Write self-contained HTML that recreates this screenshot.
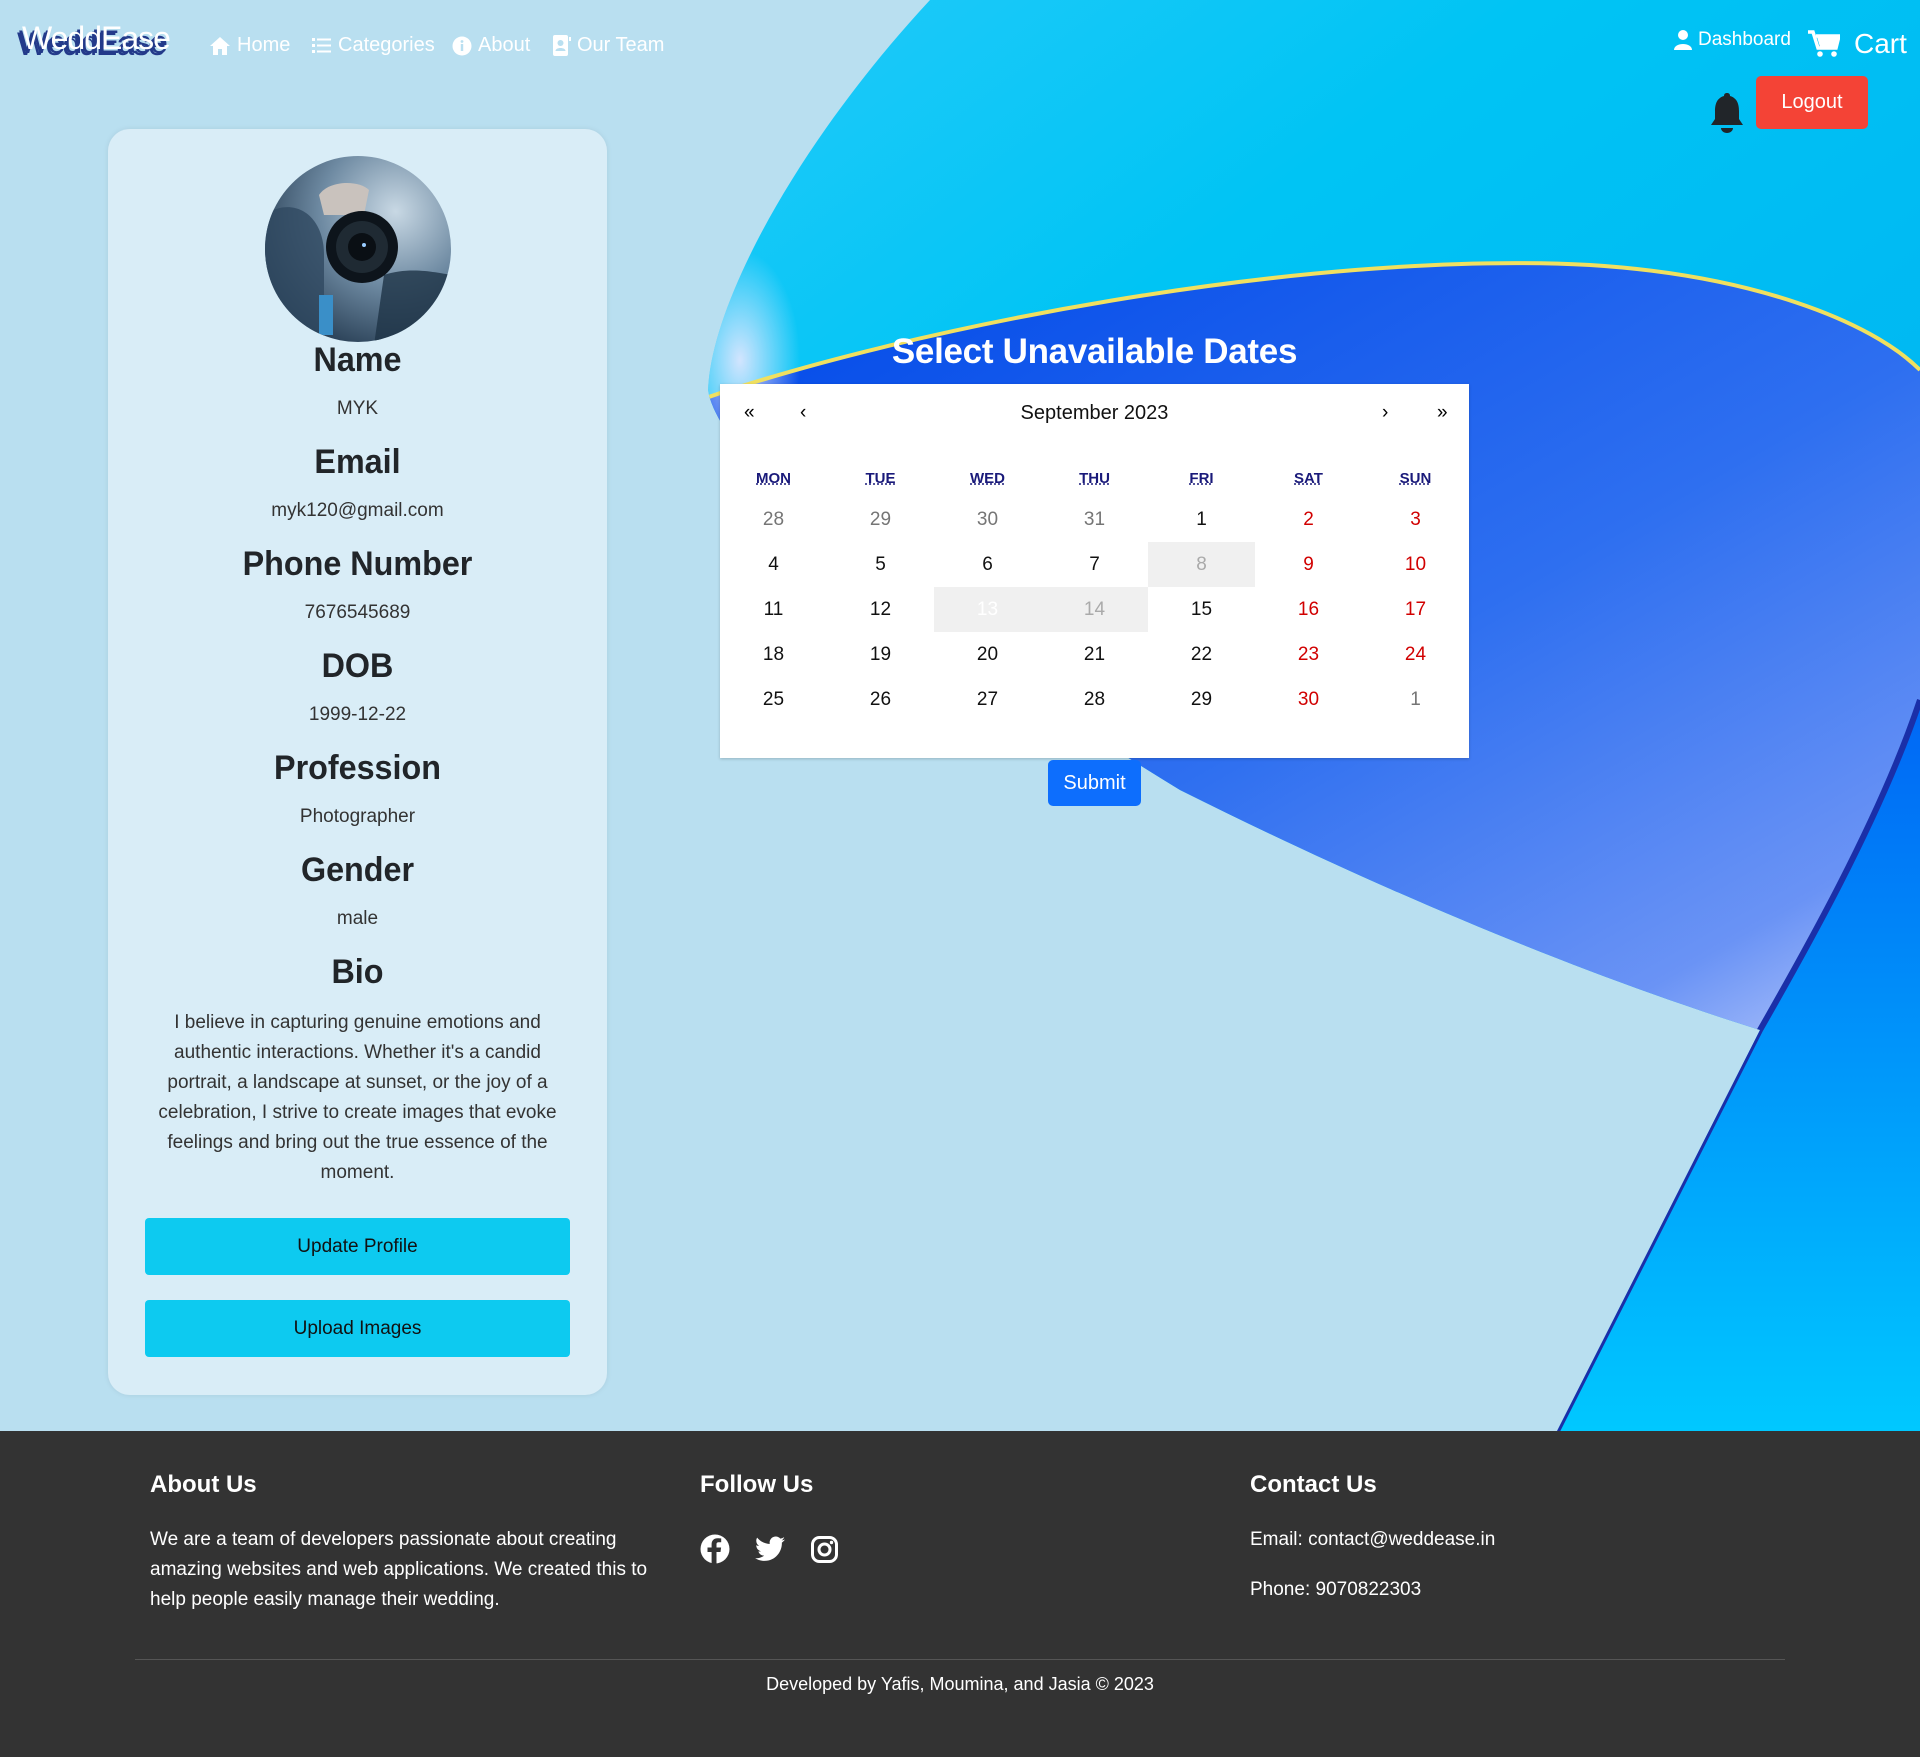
<!DOCTYPE html>
<html><head><meta charset="utf-8"><style>
*{margin:0;padding:0;box-sizing:border-box}
body{width:1920px;height:1757px;background:#b9dff0;font-family:"Liberation Sans",sans-serif;position:relative;overflow:hidden}
.a{position:absolute}
.nav{color:#fff;font-size:20px;top:34px;display:flex;align-items:center;gap:6px}
.card{left:108px;top:129px;width:499px;height:1266px;background:#d9edf7;border-radius:22px;box-shadow:0 0 6px rgba(0,0,0,.08)}
.h{position:absolute;width:100%;text-align:center;font-size:34px;color:#212529;font-weight:bold;transform:scaleX(.95)}
.v{position:absolute;width:100%;text-align:center;font-size:19px;color:#333}
.btn{position:absolute;left:37px;width:425px;height:57px;background:#0dcaf0;border-radius:4px;text-align:center;line-height:57px;font-size:19px;color:#111}
.cal{left:720px;top:384px;width:749px;height:374px;background:#fff;box-shadow:0 1px 3px rgba(0,0,0,.2);font-family:"Liberation Sans",Arial,sans-serif}
.c{position:absolute;width:107px;height:45px;line-height:45px;text-align:center;font-size:19px;color:#111}
.wd{position:absolute;width:107px;text-align:center;font-size:15px;font-weight:bold;color:#1a1a7a;text-decoration:underline dotted;top:86px}
.g{color:#757575}.r{color:#d10000}.hl{background:#f0f0f0}
.foot{left:0;top:1431px;width:1920px;height:326px;background:#333;color:#fff}
.fh{position:absolute;font-size:24px;font-weight:bold;top:40px}
.ft{position:absolute;font-size:19px;line-height:30px}
</style></head><body>
<svg class="a" style="left:0;top:0" width="1920" height="1431" viewBox="0 0 1920 1431">
<defs>
<linearGradient id="g1" x1="0" y1="0" x2="1" y2="1"><stop offset="0" stop-color="#3fd0ff"/><stop offset=".4" stop-color="#00c4f4"/><stop offset="1" stop-color="#00a6f0"/></linearGradient>
<linearGradient id="g2" x1="0" y1="0" x2=".6" y2="1"><stop offset="0" stop-color="#0048e8"/><stop offset=".5" stop-color="#2e6ff0"/><stop offset=".8" stop-color="#6a93f5"/><stop offset="1" stop-color="#e8ecff"/></linearGradient>
<linearGradient id="g3" x1="0" y1="0" x2="0" y2="1"><stop offset="0" stop-color="#0066f5"/><stop offset="1" stop-color="#00c8ff"/></linearGradient>
<radialGradient id="lav" cx="0.5" cy="0.5" r="0.5"><stop offset="0" stop-color="#e8e8ff" stop-opacity=".9"/><stop offset="1" stop-color="#e8e8ff" stop-opacity="0"/></radialGradient>
<clipPath id="cp"><path d="M930,0 C800,140 712,300 708,390 C720,470 950,650 1180,790 C1400,900 1600,980 1760,1030 L1557,1431 L1920,1431 L1920,0Z"/></clipPath>
</defs>
<g clip-path="url(#cp)">
<rect width="1920" height="1431" fill="url(#g1)"/>
<path d="M700,400 C900,330 1300,250 1590,265 C1750,275 1870,320 1920,370 L1920,1431 L700,1431Z" fill="url(#g2)"/>
<ellipse cx="740" cy="360" rx="60" ry="110" fill="url(#lav)"/>
<path d="M700,400 C900,330 1300,250 1590,265 C1750,275 1870,320 1920,370" fill="none" stroke="#f0e060" stroke-width="4"/>
<path d="M1920,700 C1880,820 1800,960 1760,1030 L1557,1431 L1920,1431Z" fill="url(#g3)"/>
<path d="M1920,700 C1880,820 1800,960 1760,1030 L1557,1431" fill="none" stroke="#1a2fa8" stroke-width="6"/>
</g>
</svg>

<div class="a" style="left:22px;top:20px;font-size:32px;color:#fff;text-shadow:-3px 4px 0 #233a8a,-5px 6px 0 #233a8a;letter-spacing:-1px">WeddEase</div>
<div class="a nav" style="left:209px"><svg width="22" height="20" viewBox="0 0 22 20"><path d="M11 1L1 10h3v9h5v-6h4v6h5v-9h3z" fill="#fff"/></svg>Home</div>
<div class="a nav" style="left:312px"><svg width="20" height="18" viewBox="0 0 20 18"><g fill="#fff"><rect x="0" y="1" width="3" height="3"/><rect x="0" y="7" width="3" height="3"/><rect x="0" y="13" width="3" height="3"/><rect x="5" y="1.5" width="14" height="2"/><rect x="5" y="7.5" width="14" height="2"/><rect x="5" y="13.5" width="14" height="2"/></g></svg>Categories</div>
<div class="a nav" style="left:452px"><svg width="20" height="20" viewBox="0 0 20 20"><circle cx="10" cy="10" r="9.5" fill="#fff"/><rect x="8.8" y="8" width="2.4" height="7" fill="#b9dff0"/><circle cx="10" cy="5.5" r="1.4" fill="#b9dff0"/></svg>About</div>
<div class="a nav" style="left:553px"><svg width="18" height="22" viewBox="0 0 18 22"><rect x="0" y="0" width="15" height="21" rx="2" fill="#fff"/><rect x="16" y="2" width="2" height="4" fill="#fff"/><circle cx="7.5" cy="8" r="3" fill="#b9dff0"/><path d="M2.5 16c0-4 10-4 10 0z" fill="#b9dff0"/></svg>Our Team</div>

<div class="a nav" style="left:1674px;top:29px;font-size:19px"><svg width="18" height="20" viewBox="0 0 18 20"><circle cx="9" cy="5" r="5" fill="#fff"/><path d="M0 20c0-8 18-8 18 0z" fill="#fff"/></svg>Dashboard</div>
<div class="a nav" style="left:1808px;top:28px;font-size:28px;gap:14px"><svg width="32" height="28" viewBox="0 0 32 28"><path d="M0 2h5l5 16h18l3-12H8" fill="none" stroke="#fff" stroke-width="3.5"/><path d="M9 7h21l-3 10H12z" fill="#fff"/><circle cx="12" cy="24" r="2.8" fill="#fff"/><circle cx="26" cy="24" r="2.8" fill="#fff"/></svg>Cart</div>
<svg class="a" style="left:1709px;top:91px" width="36" height="42" viewBox="0 0 36 42"><path d="M18 2c2 0 3 1 3 3 7 2 9 8 9 15v8l4 6H2l4-6v-8c0-7 2-13 9-15 0-2 1-3 3-3z" fill="#212529"/><path d="M12 37h12c0 3-3 5-6 5s-6-2-6-5z" fill="#212529"/></svg>
<div class="a" style="left:1756px;top:76px;width:112px;height:53px;background:#f44336;border-radius:5px;color:#fff;font-size:20px;text-align:center;line-height:53px">Logout</div>

<div class="a card">
<svg class="a" style="left:156px;top:26px" width="188" height="188" viewBox="0 0 188 188">
<defs><clipPath id="av"><circle cx="94" cy="94" r="93"/></clipPath>
<radialGradient id="sm" cx=".7" cy=".3" r=".8"><stop offset="0" stop-color="#c8d8e4"/><stop offset=".5" stop-color="#6e8aa2"/><stop offset="1" stop-color="#243a50"/></radialGradient></defs>
<g clip-path="url(#av)"><rect width="188" height="188" fill="url(#sm)"/>
<path d="M0 60C30 40 60 60 60 100L60 188H0z" fill="#2f4960" opacity=".8"/>
<path d="M120 120c30-10 60 0 70 0v70H110z" fill="#1e3346" opacity=".8"/>
<path d="M55 40c10-15 40-15 50-5l-5 25H60z" fill="#c9c2bd"/>
<circle cx="98" cy="92" r="36" fill="#0d141b"/><circle cx="98" cy="92" r="26" fill="#1f2a33"/><circle cx="98" cy="92" r="14" fill="#0a0f14"/><circle cx="100" cy="90" r="2" fill="#9cf"/>
<rect x="55" y="140" width="14" height="40" fill="#3a8fc8"/>
</g></svg>
<div class="h" style="top:212px">Name</div><div class="v" style="top:269px">MYK</div>
<div class="h" style="top:314px">Email</div><div class="v" style="top:371px">myk120@gmail.com</div>
<div class="h" style="top:416px">Phone Number</div><div class="v" style="top:473px">7676545689</div>
<div class="h" style="top:518px">DOB</div><div class="v" style="top:575px">1999-12-22</div>
<div class="h" style="top:620px">Profession</div><div class="v" style="top:677px">Photographer</div>
<div class="h" style="top:722px">Gender</div><div class="v" style="top:779px">male</div>
<div class="h" style="top:824px">Bio</div>
<div class="v" style="top:879px;left:32px;width:435px;line-height:30px">I believe in capturing genuine emotions and authentic interactions. Whether it's a candid portrait, a landscape at sunset, or the joy of a celebration, I strive to create images that evoke feelings and bring out the true essence of the moment.</div>
<div class="btn" style="top:1089px">Update Profile</div>
<div class="btn" style="top:1171px">Upload Images</div>
</div>

<div class="a" style="left:720px;width:749px;top:332px;text-align:center;color:#fff;font-size:35px;font-weight:bold;letter-spacing:-.3px">Select Unavailable Dates</div>
<div class="a cal">
<div class="a" style="left:24px;top:18px;font-size:19px">«</div>
<div class="a" style="left:80px;top:18px;font-size:19px">‹</div>
<div class="a" style="left:0;width:749px;text-align:center;top:18px;font-size:20px;color:#111">September 2023</div>
<div class="a" style="left:662px;top:18px;font-size:19px">›</div>
<div class="a" style="left:717px;top:18px;font-size:19px">»</div>
<div class="wd" style="left:0">MON</div><div class="wd" style="left:107px">TUE</div><div class="wd" style="left:214px">WED</div><div class="wd" style="left:321px">THU</div><div class="wd" style="left:428px">FRI</div><div class="wd" style="left:535px">SAT</div><div class="wd" style="left:642px">SUN</div>
<div class="c g" style="left:0;top:113px">28</div><div class="c g" style="left:107px;top:113px">29</div><div class="c g" style="left:214px;top:113px">30</div><div class="c g" style="left:321px;top:113px">31</div><div class="c" style="left:428px;top:113px">1</div><div class="c r" style="left:535px;top:113px">2</div><div class="c r" style="left:642px;top:113px">3</div>
<div class="c" style="left:0;top:158px">4</div><div class="c" style="left:107px;top:158px">5</div><div class="c" style="left:214px;top:158px">6</div><div class="c" style="left:321px;top:158px">7</div><div class="c hl" style="left:428px;top:158px;color:#aaa">8</div><div class="c r" style="left:535px;top:158px">9</div><div class="c r" style="left:642px;top:158px">10</div>
<div class="c" style="left:0;top:203px">11</div><div class="c" style="left:107px;top:203px">12</div><div class="c hl" style="left:214px;top:203px;color:#fff">13</div><div class="c hl" style="left:321px;top:203px;color:#aaa">14</div><div class="c" style="left:428px;top:203px">15</div><div class="c r" style="left:535px;top:203px">16</div><div class="c r" style="left:642px;top:203px">17</div>
<div class="c" style="left:0;top:248px">18</div><div class="c" style="left:107px;top:248px">19</div><div class="c" style="left:214px;top:248px">20</div><div class="c" style="left:321px;top:248px">21</div><div class="c" style="left:428px;top:248px">22</div><div class="c r" style="left:535px;top:248px">23</div><div class="c r" style="left:642px;top:248px">24</div>
<div class="c" style="left:0;top:293px">25</div><div class="c" style="left:107px;top:293px">26</div><div class="c" style="left:214px;top:293px">27</div><div class="c" style="left:321px;top:293px">28</div><div class="c" style="left:428px;top:293px">29</div><div class="c r" style="left:535px;top:293px">30</div><div class="c g" style="left:642px;top:293px">1</div>
</div>
<div class="a" style="left:1048px;top:760px;width:93px;height:46px;background:#0d6efd;border-radius:5px;color:#fff;font-size:20px;text-align:center;line-height:46px">Submit</div>

<div class="a foot">
<div class="fh" style="left:150px">About Us</div>
<div class="ft" style="left:150px;top:94px;width:525px">We are a team of developers passionate about creating amazing websites and web applications. We created this to help people easily manage their wedding.</div>
<div class="fh" style="left:700px">Follow Us</div>
<svg class="a" style="left:700px;top:103px" width="30" height="30" viewBox="0 0 30 30"><circle cx="15" cy="15" r="14.5" fill="#fff"/><path d="M16.5 30V18h4l.6-4.5h-4.6v-3c0-1.3.4-2.2 2.2-2.2h2.5V4.4c-.4 0-1.9-.2-3.6-.2-3.6 0-6 2.2-6 6.2v3.1H7.5V18h4.1v12z" fill="#333"/></svg>
<svg class="a" style="left:755px;top:105px" width="30" height="26" viewBox="0 0 24 20"><path d="M24 2.4c-.9.4-1.8.6-2.8.8 1-.6 1.800-1.6 2.2-2.7-1 .6-2 1-3.1 1.2C19.4.7 18.1 0 16.6 0c-2.7 0-4.9 2.2-4.9 4.9 0 .4 0 .8.1 1.1C7.7 5.8 4.1 3.9 1.7.9c-.4.7-.7 1.6-.7 2.5 0 1.7.9 3.2 2.2 4.1-.8 0-1.6-.2-2.2-.6v.1c0 2.4 1.7 4.4 3.9 4.8-.4.1-.8.2-1.3.2-.3 0-.6 0-.9-.1.6 2 2.4 3.4 4.6 3.4-1.7 1.3-3.8 2.1-6.1 2.1-.4 0-.8 0-1.2-.1 2.2 1.4 4.8 2.2 7.5 2.2 9.1 0 14-7.500 14-14v-.6c1-.7 1.8-1.6 2.5-2.5z" fill="#fff"/></svg>
<svg class="a" style="left:811px;top:105px" width="27" height="27" viewBox="0 0 27 27"><rect x="1.5" y="1.5" width="24" height="24" rx="7" fill="none" stroke="#fff" stroke-width="3"/><circle cx="13.5" cy="13.5" r="5.5" fill="none" stroke="#fff" stroke-width="3"/><circle cx="20.5" cy="6.5" r="1.7" fill="#fff"/></svg>
<div class="fh" style="left:1250px">Contact Us</div>
<div class="ft" style="left:1250px;top:94px">Email: contact@weddease.in</div>
<div class="ft" style="left:1250px;top:144px">Phone: 9070822303</div>
<div class="a" style="left:135px;top:228px;width:1650px;height:1px;background:#555"></div>
<div class="a" style="left:0;width:1920px;text-align:center;top:243px;font-size:18px">Developed by Yafis, Moumina, and Jasia © 2023</div>
</div>
</body></html>
